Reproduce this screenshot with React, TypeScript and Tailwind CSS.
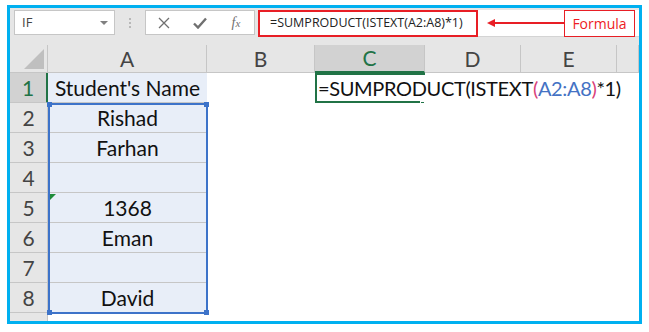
const rows = [
  { n: "1", a: "Student's Name" },
  { n: "2", a: "Rishad" },
  { n: "3", a: "Farhan" },
  { n: "4", a: "" },
  { n: "5", a: "1368" },
  { n: "6", a: "Eman" },
  { n: "7", a: "" },
  { n: "8", a: "David" },
];

const cols = ["A", "B", "C", "D", "E", ""];

export default function App() {
  return (
    <div className="w-[649px] h-[332px] bg-white pt-[5px] pl-[7px]">
      {/* FRAME */}
      <div
        className="w-[635px] h-[319px] border-[3px] border-[#00b0f0] bg-[#e6e6e6] overflow-hidden flex flex-col"
        style={{ fontFamily: "Lato, 'Liberation Sans', sans-serif" }}
      >
        {/* FORMULA BAR */}
        <div className="h-[37px] flex items-start pt-[2px] pl-[4px] shrink-0">
          <div className="w-[101px] h-[25px] bg-white border border-[#c6c6c6] flex items-center justify-between pl-[7px] pr-[6px]">
            <span className="text-[13px] text-[#444]" style={{ fontFamily: "'Open Sans', sans-serif" }}>IF</span>
            <span className="w-0 h-0 border-l-[4px] border-r-[4px] border-t-[4px] border-l-transparent border-r-transparent border-t-[#808080]" />
          </div>
          <div className="w-[30px] h-[25px] flex flex-col items-center justify-center gap-[2px]">
            <span className="w-[2px] h-[2px] bg-[#b8b8b8]" />
            <span className="w-[2px] h-[2px] bg-[#b8b8b8]" />
            <span className="w-[2px] h-[2px] bg-[#b8b8b8]" />
          </div>
          <div className="w-[110px] h-[25px] bg-white border border-[#c6c6c6] flex items-center">
            <div className="w-[36px] flex justify-center">
              <svg width="12" height="12" viewBox="0 0 12 12">
                <path d="M1 1 L11 11 M11 1 L1 11" stroke="#707070" strokeWidth="1.3" />
              </svg>
            </div>
            <div className="w-[36px] flex justify-center">
              <svg width="14" height="12" viewBox="0 0 14 12">
                <path d="M1 6.5 L5 10.5 L13 1.5" stroke="#707070" strokeWidth="2.4" fill="none" />
              </svg>
            </div>
            <div className="w-[36px] flex justify-center">
              <span className="italic text-[14px] text-[#707070]" style={{ fontFamily: "'Liberation Serif', serif" }}>
                f<span className="text-[11px]">x</span>
              </span>
            </div>
          </div>
          <div className="flex-1 h-[27px] ml-[3px] bg-white border-b border-[#d4d4d4] flex items-center">
            <div className="w-[220px] h-[27px] border-[2px] border-[#e81e25] flex items-center pl-[10px]">
              <span className="text-[12.5px] text-[#222] whitespace-nowrap" style={{ fontFamily: "'Open Sans', sans-serif" }}>
                =SUMPRODUCT(ISTEXT(A2:A8)*1)
              </span>
            </div>
            <div className="w-[77px] flex items-center ml-[9px]">
              <span className="w-0 h-0 border-t-[4px] border-b-[4px] border-r-[8px] border-t-transparent border-b-transparent border-r-[#e81e25]" />
              <span className="flex-1 h-[1.5px] bg-[#e81e25]" />
            </div>
            <div className="w-[71px] h-[27px] border border-[#e81e25] flex items-center justify-center">
              <span className="text-[14px] text-[#ee1c24]" style={{ fontFamily: "'Open Sans', sans-serif" }}>Formula</span>
            </div>
          </div>
        </div>

        {/* GRID */}
        <div className="relative flex-1 grid grid-cols-[38px_159px_108px_110px_96px_96px_1fr] grid-rows-[28px_repeat(8,30px)_1fr]">
          {/* header row */}
          <div className="bg-[#e6e6e6] border-r border-b border-[#c6c6c6] flex items-end justify-end pr-[3px] pb-[3px]">
            <span className="w-0 h-0 border-b-[20px] border-l-[20px] border-l-transparent border-b-[#bfbfbf]" />
          </div>
          {cols.map((c, i) => (
            <div
              key={"h" + i}
              className={
                c === "C"
                  ? "bg-[#d2d2d2] border-r border-[#c6c6c6] border-b-[2px] border-b-[#217346] flex items-center justify-center text-[21px] text-[#217346]"
                  : "bg-[#e6e6e6] border-r border-b border-[#c6c6c6] flex items-center justify-center text-[21px] text-[#444]"
              }
            >
              {c}
            </div>
          ))}

          {rows.map((r, ri) => (
            <>
              <div
                key={"n" + ri}
                className={
                  ri === 0
                    ? "bg-[#d2d2d2] border-b border-[#c6c6c6] border-r-[2px] border-r-[#217346] flex items-center justify-center text-[21px] text-[#217346]"
                    : "bg-[#e6e6e6] border-b border-r border-[#c6c6c6] flex items-center justify-center text-[21px] text-[#444]"
                }
              >
                {r.n}
              </div>
              <div
                key={"a" + ri}
                className="relative bg-[#e8eef8] border-b border-[#c6c6c6] flex items-center justify-center text-[21px] text-[#111]"
              >
                {r.n === "5" && (
                  <span className="absolute left-[1px] top-[1px] w-0 h-0 border-t-[7px] border-r-[7px] border-r-transparent border-t-[#1e8c3a]" />
                )}
                {r.a}
              </div>
              <div key={"b" + ri} className="bg-white" />
              <div key={"c" + ri} className="bg-white relative">
                {ri === 0 && (
                  <>
                    <div className="absolute inset-0 border-[2px] border-r-0 border-[#217346]" />
                    <span className="absolute right-[0px] bottom-[-3px] w-[5px] h-[5px] bg-[#217346] border border-white" />
                    <span className="absolute left-[3px] top-0 h-full flex items-center whitespace-nowrap text-[20px] tracking-[-0.35px] text-[#111] z-10">
                      =SUMPRODUCT(ISTEXT<span className="text-[#d9427a]">(</span>
                      <span className="text-[#4472c4]">A2:A8</span>
                      <span className="text-[#d9427a]">)</span>*1)
                    </span>
                  </>
                )}
              </div>
              <div key={"d" + ri} className="bg-white" />
              <div key={"e" + ri} className="bg-white" />
              <div key={"f" + ri} className="bg-white" />
            </>
          ))}

          {/* row 9 partial */}
          <div className="bg-[#e6e6e6] border-r border-[#c6c6c6] flex justify-center text-[21px] text-[#444] overflow-hidden">
            <span className="leading-none pt-[4px]">9</span>
          </div>
          <div className="bg-white col-span-6" />

          {/* selection overlay A2:A8 */}
          <div className="absolute left-[38px] top-[58px] w-[160px] h-[211px] border-[2px] border-[#3d73c9] pointer-events-none">
            <span className="absolute -left-[3px] -top-[3px] w-[5px] h-[5px] bg-[#3d73c9]" />
            <span className="absolute -right-[3px] -top-[3px] w-[5px] h-[5px] bg-[#3d73c9]" />
            <span className="absolute -left-[3px] -bottom-[3px] w-[5px] h-[5px] bg-[#3d73c9]" />
            <span className="absolute -right-[3px] -bottom-[3px] w-[5px] h-[5px] bg-[#3d73c9]" />
          </div>
        </div>
      </div>
    </div>
  );
}
